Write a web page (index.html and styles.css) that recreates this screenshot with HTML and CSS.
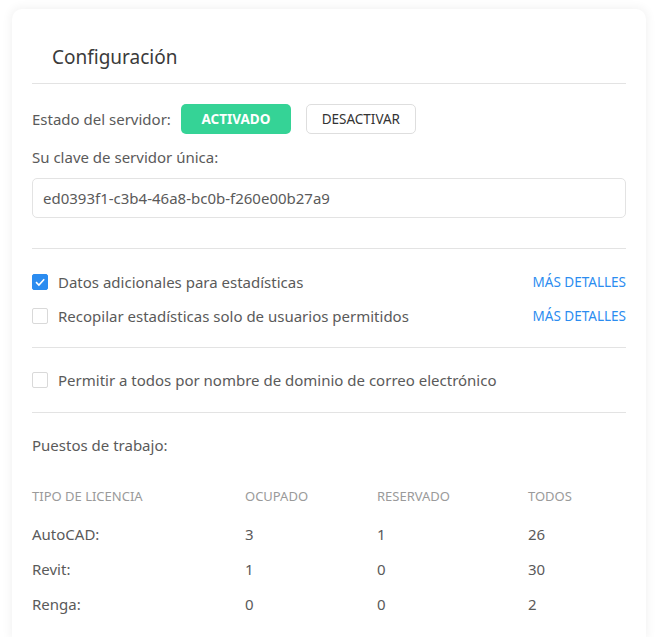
FILE: index.html
```html
<!DOCTYPE html>
<html lang="es">
<head>
<meta charset="utf-8">
<link rel="stylesheet" href="styles.css">
</head>
<body>
<div class="card">
  <div class="card-head"><h1 class="title">Configuración</h1></div>
  <div class="row server-row">
    <span class="label">Estado del servidor:</span>
    <span class="btn btn-on">ACTIVADO</span>
    <span class="btn btn-off">DESACTIVAR</span>
  </div>
  <div class="label key-label">Su clave de servidor única:</div>
  <div class="input">ed0393f1-c3b4-46a8-bc0b-f260e00b27a9</div>
  <div class="divider divider-top"></div>
  <div class="checks">
    <div class="check-row">
      <span class="box box-checked"><svg viewBox="0 0 16 16" width="16" height="16"><path d="M4 8.2 L6.9 11 L12.2 5.3" fill="none" stroke="#fff" stroke-width="1.6"/></svg></span>
      <span class="check-text">Datos adicionales para estadísticas</span>
      <span class="link">MÁS DETALLES</span>
    </div>
    <div class="check-row">
      <span class="box"></span>
      <span class="check-text">Recopilar estadísticas solo de usuarios permitidos</span>
      <span class="link">MÁS DETALLES</span>
    </div>
  </div>
  <div class="divider"></div>
  <div class="checks single">
    <div class="check-row">
      <span class="box"></span>
      <span class="check-text">Permitir a todos por nombre de dominio de correo electrónico</span>
    </div>
  </div>
  <div class="divider"></div>
  <div class="label seats-label">Puestos de trabajo:</div>
  <div class="table">
    <div class="tr th"><span>TIPO DE LICENCIA</span><span>OCUPADO</span><span>RESERVADO</span><span>TODOS</span></div>
    <div class="tr"><span>AutoCAD:</span><span>3</span><span>1</span><span>26</span></div>
    <div class="tr"><span>Revit:</span><span>1</span><span>0</span><span>30</span></div>
    <div class="tr"><span>Renga:</span><span>0</span><span>0</span><span>2</span></div>
  </div>
</div>
</body>
</html>
```
FILE: styles.css
```css
* { box-sizing: border-box; }
html, body { margin: 0; padding: 0; }
body {
  background: #ffffff;
  font-family: "Noto Sans", "Open Sans", sans-serif;
  color: #555;
  height: 637px;
  overflow: hidden;
}
.card {
  margin: 9px 0 0 12px;
  width: 634px;
  height: 628px;
  background: #fff;
  border-radius: 10px 10px 0 0;
  box-shadow: 0 0 10px 2px rgba(0,0,0,0.05);
  padding: 0 20px;
}
.card-head {
  height: 75px;
  padding: 35px 0 0 20px;
  border-bottom: 1px solid #e3e3e3;
}
.title {
  margin: 0;
  font-size: 19px;
  font-weight: 400;
  line-height: 26px;
  color: #3a3a3a;
}
.row { display: flex; align-items: center; }
.server-row { margin-top: 20px; height: 30px; }
.label { font-size: 15px; line-height: 22px; color: #5a5a5a; }
.btn {
  height: 30px;
  width: 110px;
  border-radius: 5px;
  display: flex;
  align-items: center;
  justify-content: center;
  font-size: 13.5px;
}
.btn-on {
  margin-left: 10px;
  background: #35d396;
  color: #fff;
  font-weight: 700;
}
.btn-off {
  margin-left: 15px;
  border: 1px solid #dedede;
  color: #333;
}
.key-label { margin-top: 12px; }
.input {
  margin-top: 10px;
  height: 40px;
  border: 1px solid #e3e3e3;
  border-radius: 5px;
  padding: 0 10px;
  display: flex;
  align-items: center;
  font-size: 15px;
  color: #5a5a5a;
}
.divider { height: 1px; background: #e3e3e3; }
.divider-top { margin-top: 30px; }
.checks { padding: 16px 0 14px; }
.checks.single { padding: 15px 0 15px; }
.check-row { display: flex; align-items: center; height: 34px; }
.box {
  width: 16px;
  height: 16px;
  border: 1px solid #d9d9d9;
  border-radius: 2px;
  background: #fff;
  flex: none;
}
.box-checked {
  background: #2b8cf0;
  border-color: #2b8cf0;
  display: flex;
  align-items: center;
  justify-content: center;
}
.box-checked svg { display: block; margin: -1px; }
.check-text { margin-left: 10px; font-size: 15px; color: #5a5a5a; flex: 1; }
.link { font-size: 13.5px; color: #2b8cf0; }
.seats-label { margin-top: 21px; }
.table { margin-top: 22px; }
.tr {
  display: grid;
  grid-template-columns: 213px 132px 151px 1fr;
  align-items: center;
  height: 35px;
  font-size: 15px;
  color: #5a5a5a;
}
.th { height: 38px; font-size: 13px; color: #9a9a9a; padding-bottom: 2px; }
```
